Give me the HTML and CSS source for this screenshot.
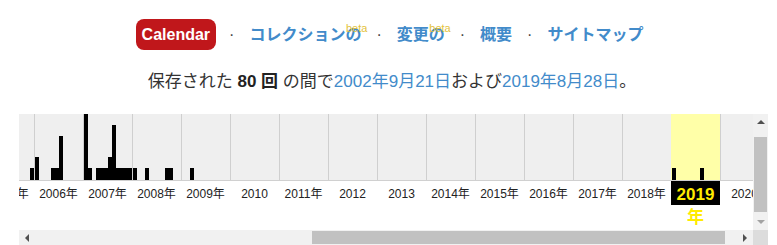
FILE: index.html
```html
<!DOCTYPE html>
<html lang="ja">
<head>
<meta charset="utf-8">
<title>Calendar</title>
<link rel="stylesheet" href="styles.css">
</head>
<body>
<div class="page">
  <nav class="nav">
    <a class="pill">Calendar</a>
    <span class="sep">·</span>
    <a class="link has-beta">コレクションの<sup class="beta">beta</sup></a>
    <span class="sep">·</span>
    <a class="link has-beta">変更の<sup class="beta">beta</sup></a>
    <span class="sep">·</span>
    <a class="link">概要</a>
    <span class="sep">·</span>
    <a class="link">サイトマップ</a>
  </nav>
  <p class="summary">保存された <strong>80 回</strong> の間で<a class="date">2002年9月21日</a>および<a class="date">2019年8月28日</a>。</p>

  <div class="chart">
    <div class="viewport">
      <div class="years">
        <div class="year">
          <div class="bars"><i></i><i></i><i></i><i></i><i></i><i></i><i></i><i></i><i></i><i></i><i></i><i style="height:12px"></i></div>
          <div class="label">2005年</div>
        </div>
        <div class="year">
          <div class="bars"><i style="height:23px"></i><i></i><i></i><i></i><i style="height:12px"></i><i style="height:12px"></i><i style="height:44px"></i><i></i><i></i><i></i><i></i><i></i></div>
          <div class="label">2006年</div>
        </div>
        <div class="year">
          <div class="bars"><i style="height:66px"></i><i style="height:12px"></i><i></i><i style="height:12px"></i><i style="height:12px"></i><i style="height:12px"></i><i style="height:23px"></i><i style="height:55px"></i><i style="height:12px"></i><i style="height:12px"></i><i style="height:12px"></i><i style="height:12px"></i></div>
          <div class="label">2007年</div>
        </div>
        <div class="year">
          <div class="bars"><i style="height:12px"></i><i></i><i></i><i style="height:12px"></i><i></i><i></i><i></i><i></i><i style="height:12px"></i><i style="height:12px"></i><i></i><i></i></div>
          <div class="label">2008年</div>
        </div>
        <div class="year">
          <div class="bars"><i></i><i></i><i style="height:12px"></i><i></i><i></i><i></i><i></i><i></i><i></i><i></i><i></i><i></i></div>
          <div class="label">2009年</div>
        </div>
        <div class="year"><div class="bars"></div><div class="label">2010</div></div>
        <div class="year"><div class="bars"></div><div class="label">2011年</div></div>
        <div class="year"><div class="bars"></div><div class="label">2012</div></div>
        <div class="year"><div class="bars"></div><div class="label">2013</div></div>
        <div class="year"><div class="bars"></div><div class="label">2014年</div></div>
        <div class="year"><div class="bars"></div><div class="label">2015年</div></div>
        <div class="year"><div class="bars"></div><div class="label">2016年</div></div>
        <div class="year"><div class="bars"></div><div class="label">2017年</div></div>
        <div class="year"><div class="bars"></div><div class="label">2018年</div></div>
        <div class="year selected">
          <div class="bars"><i style="height:12px"></i><i></i><i></i><i></i><i></i><i></i><i></i><i style="height:12px"></i><i></i><i></i><i></i><i></i></div>
          <div class="label"><span class="sel">2019年</span></div>
        </div>
        <div class="year"><div class="bars"></div><div class="label">2020</div></div>
      </div>
    </div>
    <div class="vbar">
      <div class="btn"><span class="tri up"></span></div>
      <div class="vthumb"></div>
      <div class="btn bottom"><span class="tri down"></span></div>
    </div>
    <div class="hbar">
      <div class="btn"><span class="tri left"></span></div>
      <div class="hthumb"></div>
      <div class="btn right-btn"><span class="tri right"></span></div>
    </div>
    <div class="corner"></div>
  </div>
</div>
</body>
</html>
```

FILE: styles.css
```css
html, body {
  margin: 0;
  padding: 0;
  background: #fff;
}
body {
  font-family: "Liberation Sans", Arial, "Noto Sans CJK JP", sans-serif;
  color: #333;
}
.page {
  padding-top: 19px;
}
.nav {
  display: flex;
  justify-content: center;
  align-items: center;
  height: 31px;
  padding-left: 4px;
}
.pill {
  background: #c0171b;
  color: #fff;
  font-weight: bold;
  font-size: 16px;
  line-height: 31px;
  height: 31px;
  padding: 0 6px;
  border-radius: 8px;
}
.sep {
  color: #444;
  font-size: 16px;
  line-height: 20px;
  padding: 0 13px;
}
.link {
  color: #428bca;
  font-weight: bold;
  font-size: 16px;
  line-height: 20px;
  margin: 0 2px;
}
.has-beta {
  position: relative;
}
.beta {
  position: absolute;
  right: -6px;
  top: -2px;
  font-size: 11px;
  line-height: 11px;
  font-weight: normal;
  color: #e3c23c;
  vertical-align: baseline;
}
.summary {
  margin: 20px 0 0;
  text-align: center;
  font-size: 17px;
  line-height: 24px;
  color: #333;
  padding-left: 7px;
}
.summary strong {
  color: #222;
}
.date {
  color: #428bca;
}
.chart {
  margin: 20px 0 0 19px;
  display: grid;
  grid-template-columns: 734px 15px;
  grid-template-rows: 116px 15px;
  width: 749px;
}
.viewport {
  overflow: hidden;
  position: relative;
}
.years {
  display: flex;
  margin-left: -34px;
}
.year {
  flex: none;
  width: 49px;
}
.bars {
  height: 66px;
  box-sizing: border-box;
  border-left: 1px solid #cfcfcf;
  background: #efefef;
  display: flex;
  align-items: flex-end;
}
.bars i {
  display: block;
  flex: none;
  width: 4px;
  background: #000;
}
.selected .bars {
  background: #ffffa8;
  border-left-color: #ffffa8;
}
.label {
  border-top: 1px solid #d0d0d0;
  height: 49px;
  font-size: 12px;
  line-height: 26px;
  text-align: center;
  color: #222;
  white-space: nowrap;
}
.selected .label {
  white-space: normal;
}
.sel {
  display: block;
  height: 24px;
  box-sizing: border-box;
  padding-top: 2px;
  background: #000;
  color: #ffeb00;
  font-size: 17px;
  font-weight: bold;
  line-height: 23px;
}
.vbar {
  background: #f1f1f1;
  display: flex;
  flex-direction: column;
}
.vbar .btn {
  height: 16px;
  display: flex;
  align-items: center;
  justify-content: center;
}
.vthumb {
  height: 75px;
  margin: 7px 1px 0 1px;
  background: #c1c1c1;
}
.vbar .bottom {
  margin-top: auto;
}
.hbar {
  background: #f1f1f1;
  display: flex;
}
.hbar .btn {
  width: 16px;
  display: flex;
  align-items: center;
  justify-content: center;
}
.hthumb {
  width: 413px;
  margin: 1px 0 1px 277px;
  background: #c1c1c1;
}
.hbar .right-btn {
  margin-left: auto;
}
.corner {
  background: #dcdcdc;
}
.tri {
  width: 0;
  height: 0;
  display: block;
}
.tri.up {
  border-left: 4px solid transparent;
  border-right: 4px solid transparent;
  border-bottom: 4px solid #505050;
}
.tri.down {
  border-left: 4px solid transparent;
  border-right: 4px solid transparent;
  border-top: 4px solid #a3a3a3;
}
.tri.left {
  border-top: 4px solid transparent;
  border-bottom: 4px solid transparent;
  border-right: 4px solid #505050;
}
.tri.right {
  border-top: 4px solid transparent;
  border-bottom: 4px solid transparent;
  border-left: 4px solid #505050;
}
```
